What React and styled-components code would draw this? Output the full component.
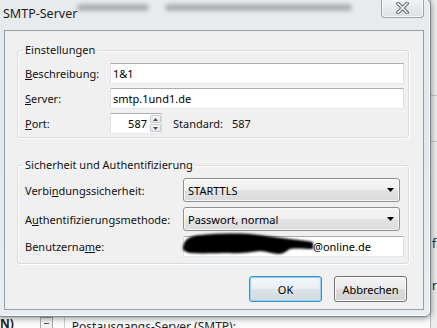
import React from "react";
import styled, { createGlobalStyle } from "styled-components";

const GlobalStyle = createGlobalStyle`
  html, body { margin: 0; padding: 0; }
  body {
    width: 437px; height: 328px; overflow: hidden;
    background: #f4f4f4;
    font-family: "Noto Sans", "Segoe UI", sans-serif;
    font-size: 11px; color: #000;
  }
  #root { width: 437px; height: 328px; position: relative; overflow: hidden; }
`;

const Desktop = styled.div`
  position: relative;
  width: 437px;
  height: 328px;
  overflow: hidden;
  background: #f6f6f6;
`;

/* ---------- underlying application window ---------- */
const BackApp = styled.div`
  position: absolute;
  inset: 0;
  display: flex;
  flex-direction: column;
  justify-content: flex-end;
`;

const BackRow = styled.div`
  height: 11px;
  display: flex;
  align-items: flex-start;
  overflow: hidden;
  background: #fbfbfb;
  font-family: "Noto Sans", sans-serif;
  font-size: 12px;
  line-height: 14px;
  color: #222;
`;

const BackText = styled.span`
  margin-left: ${(p) => p.$ml || 0}px;
  margin-top: ${(p) => p.$mt || 0}px;
  white-space: nowrap;
  font-weight: ${(p) => (p.$bold ? 700 : 400)};
`;

const BackBox = styled.span`
  margin-left: 26px;
  width: 13px;
  height: 14px;
  box-sizing: border-box;
  border: 1px solid #a9a9a9;
  background: #f2f2f2;
  display: flex;
  justify-content: center;
`;

const BackDash = styled.span`
  margin-top: 5px;
  width: 5px;
  height: 1px;
  background: #555;
`;

const BackDivider = styled.span`
  margin-left: 11px;
  width: 1px;
  height: 14px;
  background: #c9c9c9;
`;

const RightStrip = styled.div`
  position: absolute;
  top: 0;
  right: 0;
  width: 6px;
  height: 100%;
  display: flex;
  flex-direction: column;
  background: #ececec;
  border-left: 1px solid #bdbdbd;
  font-size: 12px;
  color: #222;
  overflow: hidden;
`;

const StripLine = styled.div`
  margin-top: ${(p) => p.$mt}px;
  height: 1px;
  background: #c4c4c4;
`;

const StripText = styled.div`
  margin-top: ${(p) => p.$mt}px;
  line-height: 14px;
  white-space: nowrap;
  padding-left: 1px;
`;

/* ---------- dialog window ---------- */
const Window = styled.div`
  position: absolute;
  left: -4px;
  top: -2px;
  width: 435px;
  height: 319px;
  box-sizing: border-box;
  border: 1px solid #7d858d;
  border-radius: 7px 7px 6px 6px;
  background: linear-gradient(#e9ecef, #e4e7eb 40%, #eaedf0);
  box-shadow: 0 1px 6px rgba(0, 0, 0, 0.45), inset 0 0 0 1px #f7f9fb;
  padding: 0 6px 6px 7px;
  display: flex;
  flex-direction: column;
`;

const TitleBar = styled.div`
  position: relative;
  height: 31px;
  display: flex;
  align-items: flex-start;
  flex: none;
`;

const Title = styled.div`
  position: relative;
  margin-left: -1px;
  line-height: 30px;
  font-size: 12.5px;
  color: #1a1a1a;
`;

const GlassBlur = styled.div`
  position: absolute;
  top: 5px;
  left: ${(p) => p.$left}px;
  width: ${(p) => p.$w}px;
  height: 7px;
  border-radius: 4px;
  background: rgba(60, 60, 60, 0.35);
  filter: blur(2px);
`;

const CloseButton = styled.div`
  margin-left: auto;
  margin-right: 0;
  width: 43px;
  height: 19px;
  box-sizing: border-box;
  border: 1px solid #9aa1a9;
  border-top: none;
  border-radius: 0 0 4px 4px;
  background: linear-gradient(#f3f5f7, #e6e9ec 50%, #dde1e5);
  box-shadow: inset 0 0 0 1px rgba(255, 255, 255, 0.8);
  display: flex;
  align-items: center;
  justify-content: center;
`;

const Client = styled.div`
  flex: 1;
  background: #f0f0f0;
  border: 1px solid #969ea7;
  display: flex;
  flex-direction: column;
  padding: 11px 14px 0 12px;
`;

const GroupBox = styled.fieldset`
  margin: 0;
  margin-top: ${(p) => p.$mt || 0}px;
  padding: 0;
  min-width: 0;
  border: 1px solid #d3dce2;
  border-radius: 3px;
  box-shadow: inset 1px 1px 0 #fff, 1px 1px 0 #fff;
`;

const Legend = styled.legend`
  margin-left: 5px;
  padding: 0 2px;
  line-height: 16px;
  font-size: 11px;
  color: #111;
`;

const GroupBody = styled.div`
  display: flex;
  flex-direction: column;
  gap: ${(p) => p.$gap}px;
  padding: 5px 4px ${(p) => p.$pb}px 7px;
`;

const Row = styled.div`
  display: flex;
  align-items: center;
  height: ${(p) => p.$h}px;
`;

const Label = styled.label`
  flex: none;
  width: ${(p) => p.$w}px;
  color: #111;
  white-space: nowrap;
`;

const TextField = styled.input`
  flex: 1;
  min-width: 0;
  height: 21px;
  box-sizing: border-box;
  margin: 0;
  padding: 0 3px 0 2px;
  border: 1px solid;
  border-color: #abadb3 #dbdfe6 #e3e9ef #e2e3ea;
  background: #fff;
  font-family: inherit;
  font-size: 11px;
  color: #000;
  outline: none;
`;

const SpinBox = styled.div`
  flex: none;
  width: 52px;
  height: 21px;
  box-sizing: border-box;
  border: 1px solid;
  border-color: #abadb3 #dbdfe6 #e3e9ef #e2e3ea;
  background: #fff;
  display: flex;
`;

const SpinInput = styled.input`
  flex: 1;
  min-width: 0;
  border: none;
  margin: 0;
  padding: 0 3px 0 0;
  text-align: right;
  background: transparent;
  font-family: inherit;
  font-size: 11px;
  color: #000;
  outline: none;
`;

const SpinButtons = styled.div`
  width: 11px;
  display: flex;
  flex-direction: column;
  gap: 1px;
  padding: 1px 0;
`;

const SpinButton = styled.div`
  flex: 1;
  box-sizing: border-box;
  border: 1px solid #c6cad0;
  border-radius: 1px;
  background: linear-gradient(#f7f7f7, #e4e6e9);
  display: flex;
  align-items: center;
  justify-content: center;
`;

const InlineText = styled.span`
  margin-left: ${(p) => p.$ml}px;
  color: #111;
`;

const Combo = styled.div`
  flex: 1;
  min-width: 0;
  height: 24px;
  box-sizing: border-box;
  margin-right: ${(p) => p.$mr || 0}px;
  border: 1px solid #8e8f8f;
  border-radius: 3px;
  background: linear-gradient(#f6f6f6, #eeeeee 50%, #e3e3e3 50%, #dcdcdc);
  box-shadow: inset 0 0 0 1px rgba(255, 255, 255, 0.75);
  display: flex;
  align-items: center;
  padding: 0 5px 0 4px;
  color: #000;
`;

const ComboText = styled.span`
  flex: 1;
`;

const RedactedField = styled.div`
  flex: 1;
  min-width: 0;
  height: 21px;
  box-sizing: border-box;
  border: 1px solid;
  border-color: #abadb3 #dbdfe6 #e3e9ef #e2e3ea;
  background: #fff;
  display: flex;
  align-items: center;
  color: #000;
`;

const Blob = styled.svg`
  flex: none;
  align-self: flex-start;
  margin: -4px 0 0 -2px;
  overflow: visible;
`;

const ButtonRow = styled.div`
  margin-top: 12px;
  display: flex;
  justify-content: flex-end;
  gap: 12px;
  padding-right: 2px;
`;

const Button = styled.button`
  width: 73px;
  height: 26px;
  margin: 0;
  padding: 0;
  border: 1px solid ${(p) => (p.$default ? "#3c8fc8" : "#707070")};
  border-radius: 3px;
  background: ${(p) =>
    p.$default
      ? "linear-gradient(#f4f8fb, #e9eef2 50%, #dde3e8 50%, #d3d9de)"
      : "linear-gradient(#f2f2f2, #ebebeb 50%, #dddddd 50%, #d1d1d1)"};
  box-shadow: ${(p) =>
    p.$default
      ? "inset 0 0 0 1px #8fd3f4, inset 0 0 2px 1px #c4eafc"
      : "inset 0 0 0 1px #fbfbfb"};
  font-family: inherit;
  font-size: 11px;
  color: #000;
`;

const Up = () => (
  <svg width="5" height="3" viewBox="0 0 5 3">
    <path d="M0 3 L2.5 0 L5 3 Z" fill="#4d5358" />
  </svg>
);
const Down = () => (
  <svg width="5" height="3" viewBox="0 0 5 3">
    <path d="M0 0 L2.5 3 L5 0 Z" fill="#4d5358" />
  </svg>
);
const Arrow = () => (
  <svg width="7" height="4" viewBox="0 0 7 4">
    <path d="M0 0 H7 L3.5 4 Z" fill="#000" />
  </svg>
);
const CloseX = () => (
  <svg width="13" height="12" viewBox="0 0 13 12">
    <path d="M2 1.5 L11 10.5 M11 1.5 L2 10.5" stroke="#5f6468" strokeWidth="3.6" strokeLinecap="square" />
    <path d="M2 1.5 L11 10.5 M11 1.5 L2 10.5" stroke="#f3f4f5" strokeWidth="1.6" strokeLinecap="square" />
  </svg>
);

export default function App() {
  return (
    <Desktop>
      <GlobalStyle />
      <BackApp>
        <BackRow>
          <BackText $bold>N)</BackText>
          <BackBox>
            <BackDash />
          </BackBox>
          <BackDivider />
          <BackText $ml={7} $mt={3}>Postausgangs-Server (SMTP):</BackText>
        </BackRow>
      </BackApp>
      <RightStrip>
        <StripLine $mt={95} />
        <StripLine $mt={45} />
        <StripText $mt={95}>fi</StripText>
        <StripText $mt={28}>r</StripText>
      </RightStrip>

      <Window>
        <TitleBar>
          <GlassBlur $left={73} $w={72} />
          <GlassBlur $left={161} $w={187} />
          <Title>SMTP-Server</Title>
          <CloseButton>
            <CloseX />
          </CloseButton>
        </TitleBar>

        <Client>
          <GroupBox>
            <Legend>Einstellungen</Legend>
            <GroupBody $gap={4} $pb={3}>
              <Row $h={21}>
                <Label $w={85}>
                  <u>B</u>eschreibung:
                </Label>
                <TextField readOnly value="1&1" />
              </Row>
              <Row $h={21}>
                <Label $w={85}>
                  <u>S</u>erver:
                </Label>
                <TextField readOnly value="smtp.1und1.de" />
              </Row>
              <Row $h={21}>
                <Label $w={85}>
                  <u>P</u>ort:
                </Label>
                <SpinBox>
                  <SpinInput readOnly value="587" />
                  <SpinButtons>
                    <SpinButton>
                      <Up />
                    </SpinButton>
                    <SpinButton>
                      <Down />
                    </SpinButton>
                  </SpinButtons>
                </SpinBox>
                <InlineText $ml={11}>Standard:</InlineText>
                <InlineText $ml={9}>587</InlineText>
              </Row>
            </GroupBody>
          </GroupBox>

          <GroupBox $mt={19}>
            <Legend>Sicherheit und Authentifizierung</Legend>
            <GroupBody $gap={5} $pb={6}>
              <Row $h={24}>
                <Label $w={158}>
                  Verbi<u>n</u>dungssicherheit:
                </Label>
                <Combo $mr={4}>
                  <ComboText>STARTTLS</ComboText>
                  <Arrow />
                </Combo>
              </Row>
              <Row $h={24}>
                <Label $w={158}>
                  A<u>u</u>thentifizierungsmethode:
                </Label>
                <Combo $mr={4}>
                  <ComboText>Passwort, normal</ComboText>
                  <Arrow />
                </Combo>
              </Row>
              <Row $h={21}>
                <Label $w={158}>
                  Benutzerna<u>m</u>e:
                </Label>
                <RedactedField>
                  <Blob width="131" height="24" viewBox="0 0 131 24">
                    <defs>
                      <filter id="soft" x="-10%" y="-30%" width="120%" height="160%">
                        <feGaussianBlur stdDeviation="0.9" />
                      </filter>
                    </defs>
                    <path
                      d="M1 14 C2 8 5 5 12 3 C25 1 45 0 68 1 C80 2 90 4 108 6 C118 7 126 8 131 9 L131 16 C122 16 114 15 108 16 C104 18 102 21 97 21 C90 21 84 18 78 18 C68 19 58 21 48 20 C35 20 20 21 8 20 C3 19 0 17 1 14 Z"
                      fill="#000"
                      filter="url(#soft)"
                    />
                  </Blob>
                  <span>@online.de</span>
                </RedactedField>
              </Row>
            </GroupBody>
          </GroupBox>

          <ButtonRow>
            <Button $default>OK</Button>
            <Button>Abbrechen</Button>
          </ButtonRow>
        </Client>
      </Window>
    </Desktop>
  );
}
